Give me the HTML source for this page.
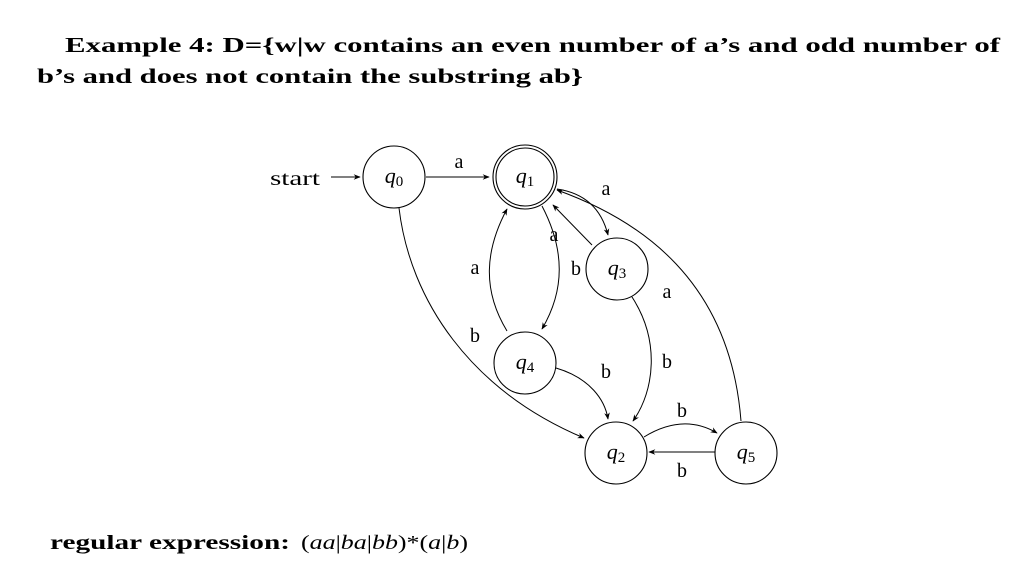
<!DOCTYPE html>
<html><head><meta charset="utf-8"><style>
html,body{margin:0;padding:0;background:#fff;}
svg{display:block;}
text{font-family:"Liberation Serif",serif;fill:#000;}
</style></head><body>
<svg width="1036" height="573" viewBox="0 0 1036 573" xmlns="http://www.w3.org/2000/svg">
<defs>
<marker id="ar" viewBox="0 0 10 10" refX="9" refY="5" markerWidth="7" markerHeight="7" orient="auto">
<path d="M0,1 L10,5 L0,9 L3,5 Z" fill="#000"/>
</marker>
</defs>
<text x="65" y="52" font-size="21" font-weight="bold" textLength="935" lengthAdjust="spacingAndGlyphs">Example 4:  D={w|w contains an even number of a’s and odd number of</text>
<text x="37" y="83" font-size="21" font-weight="bold" textLength="546" lengthAdjust="spacingAndGlyphs">b’s and does not contain the substring ab}</text>

<g fill="none" stroke="#000" stroke-width="1.1">
<circle cx="394" cy="177" r="31"/>
<circle cx="525" cy="177" r="32"/>
<circle cx="525" cy="177" r="29"/>
<circle cx="617" cy="269" r="31"/>
<circle cx="525" cy="363" r="31"/>
<circle cx="616" cy="453" r="31"/>
<circle cx="746" cy="453" r="31"/>
</g>
<g fill="none" stroke="#000" stroke-width="1" marker-end="url(#ar)">
<path d="M331,177 L360,177"/>
<path d="M426,177 L489,177"/>
<path d="M399,208 C410,300 470,390 584,438"/>
<path d="M542,206 C565,250 565,290 542,329"/>
<path d="M507,331 C482,290 485,250 507,209"/>
<path d="M557,189 Q598,195 608,235"/>
<path d="M592,245 L553,205"/>
<path d="M632,297 C660,340 655,390 633,421"/>
<path d="M556,368 C590,378 605,400 608,419"/>
<path d="M644,437 Q683,413 717,433"/>
<path d="M715,452 L649,452"/>
<path d="M741,421 C730,280 640,220 557,190"/>
</g>
<g font-size="20" text-anchor="middle">
<text x="295" y="185" textLength="50" lengthAdjust="spacingAndGlyphs">start</text>
<text x="459" y="168">a</text>
<text x="606" y="195">a</text>
<text x="554" y="241">a</text>
<text x="475" y="274">a</text>
<text x="576" y="275">b</text>
<text x="667" y="298">a</text>
<text x="475" y="342">b</text>
<text x="606" y="378">b</text>
<text x="667" y="368">b</text>
<text x="682" y="417">b</text>
<text x="682" y="477">b</text>
</g>
<g font-size="22" font-style="italic" text-anchor="middle">
<text x="394" y="183">q<tspan font-style="normal" font-size="15" dy="3">0</tspan></text>
<text x="525" y="183">q<tspan font-style="normal" font-size="15" dy="3">1</tspan></text>
<text x="617" y="275">q<tspan font-style="normal" font-size="15" dy="3">3</tspan></text>
<text x="525" y="369">q<tspan font-style="normal" font-size="15" dy="3">4</tspan></text>
<text x="616" y="459">q<tspan font-style="normal" font-size="15" dy="3">2</tspan></text>
<text x="746" y="459">q<tspan font-style="normal" font-size="15" dy="3">5</tspan></text>
</g>
<text x="50" y="549" font-size="20" font-weight="bold" textLength="240" lengthAdjust="spacingAndGlyphs">regular expression:</text>
<text x="301" y="549" font-size="20" textLength="167" lengthAdjust="spacingAndGlyphs">(<tspan font-style="italic">aa</tspan>|<tspan font-style="italic">ba</tspan>|<tspan font-style="italic">bb</tspan>)*(<tspan font-style="italic">a</tspan>|<tspan font-style="italic">b</tspan>)</text>
</svg>
</body></html>
